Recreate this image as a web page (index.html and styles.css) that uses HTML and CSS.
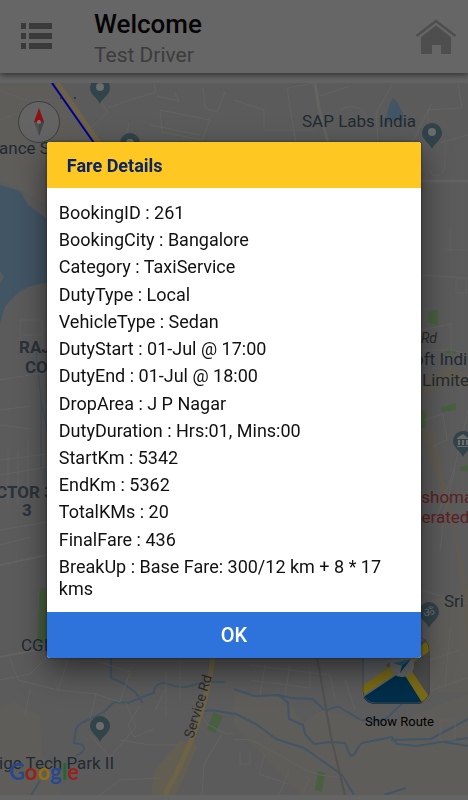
FILE: index.html
```
<!DOCTYPE html>
<html lang="en">
<head>
  <meta charset="UTF-8" />
  <meta name="viewport" content="width=device-width, initial-scale=1.0"/>
  <title>Fare Details</title>
  <link rel="stylesheet" href="styles.css">
</head>
<body>
  <header class="topbar">
    <button class="icon-btn" type="button" aria-label="Menu">
      <svg width="32" height="27" viewBox="0 0 32 27" fill="#3a3a3a">
        <path d="M0 0h5v6H0zM8 0h23v6H8zM0 10h5v6H0zM8 10h23v6H8zM0 20h5v6H0zM8 20h23v6H8z"/>
      </svg>
    </button>
    <div class="titles">
      <h1>Welcome</h1>
      <p>Test Driver</p>
    </div>
    <a class="home-link" href="#" aria-label="Home">
      <svg width="42" height="36" viewBox="0 0 42 36">
        <path d="M1.500 17L21 2l19.500 15" fill="none" stroke="#4e4e4e" stroke-width="2.500"/>
        <path d="M6 18L21 6.500 36 18v17H26v-9h-9v9H6z" fill="#4e4e4e"/>
      </svg>
    </a>
  </header>

  <main class="map">
    <svg class="map-canvas" viewBox="0 83 468 712" preserveAspectRatio="xMidYMid slice">
      <defs>
        <g id="pin">
          <path d="M0 16C-2 10-10 7-10 0a10 10 0 0 1 20 0C10 7 2 10 0 16z"/>
        </g>
      </defs>
      <rect x="0" y="83" width="468" height="712" fill="#5b5b5b"/>

      <!-- land -->
      <g fill="#5f5d5a">
        <path d="M0 83h54l50 62-57 60L0 180zM0 708l14-6 26 14 2 40 18 16v23H0z"/>
        <path d="M234 690l50 8 20 24 18-12 60 16 86-32v101H300l-66-70zM430 600l38-8v100h-38z"/>
        <path d="M155 770l25-30 18 6-22 49h-25z" fill="#635e52"/>
        <path d="M420 430l14 40 18 60 10 60 6 60v-60l-14-70-20-90z" fill="#605c53"/>
        <path d="M422 380l26-14 20 8v14l-22-6-24 14z" fill="#605c53"/>
      </g>

      <!-- parks -->
      <g fill="#48603f">
        <path d="M428 312l10-2v16l-10-4zM445 350h11v4h-11zM441 407l15-4v7l-14 2zM421 410l6 2-2 16h-4zM460 467l8-2v6h-8zM40 588h10v55H37zM214 712l9 5-8 16-8-4zM318 771l7 2-3 19-7-2z"/>
      </g>

      <!-- water -->
      <g fill="#425565">
        <path d="M0 185l20 6 8 14 19 14v64c-20 1-32 10-42 24L0 323v-40l4-6-4-6z"/>
        <path d="M393 98l4 4 6 12v7l-12-1-8 8 3-10 3-12z"/>
      </g>
      <g fill="none" stroke="#425565" stroke-width="2" stroke-linejoin="round">
        <path d="M111 657v21l12 5 12 9 8 11"/>
        <path d="M31 795l9-14M76 756c12-6 10-12-2-13l2-14c4-8 12-8 28-17l10-10 14 1 14-6 12-4c0-10 8-12 20-7 16 4 20-4 34-4h17M204 711c14-2 20 2 30 3"/>
        <path d="M234 689l20 7 25-1 12 3 22 1 10 10c6 4 10-4 16-2l22 13 16 1 10-3 22-21"/>
        <path d="M279 695l9 8 1 16 14 6 2 9 9 10 16-2 15 1 5 12c6 3 6-8 12-12l30-6 5 7 20 2 24-4 27-4M391 740l40-1 37-20M444 742l24 4"/>
        <path d="M234 713l22 11 20 15 28 9 20 14 18 13 12 20M384 795l22-7"/>
        <path d="M41 400l6 30M36 350l5 50v70M44 466v18" stroke-width="1"/>
      </g>

      <!-- roads -->
      <g fill="none" stroke="#636362" stroke-width="1">
        <path d="M0 565l47-10M0 657l47-9" stroke-width="2"/>
        <path d="M315 83l4 25 9 35M421 181h47" stroke-width="3"/>
        <path d="M287 88l3 20 6 35M288 88l26-5M378 143l-2-30 16-28M412 143l20-40M234 100l30 10v20h50M320 96l30-10M340 110c10-6 26-4 26 10M428 125v-15l34-2-4-25M440 143l28-8"/>
        <path d="M100 100l8 12-26 24M108 108l22-8 26-8-2-9M157 96l22 5-4-8M125 143l4-20M160 110l50 10-8 20-40-8zM203 88l2 20 12 4 8-20M150 125l50 10M0 90l25 10 28 0M0 120l18-7"/>
        <path d="M422 350l30 0 16 4M455 470l-10 40-5 40M468 410l-14 60-18 50M445 250h23M450 250v-20M430 170c4 12 16 4 15-8v-20M421 275l47 3M456 280v13h10v-14h-10M421 330l30-6v30M425 420l18-6 4 26-14 6"/>
        <path d="M0 380l47-8M0 410l30-4M20 320v30h22v-30H20zM22 335h20M0 460l47-6M0 475l47-8M8 450v55M18 450v55M28 440v60M0 530l47-8M0 425l30 4M0 545l30-8"/>
        <path d="M0 680l30-6 20-20M10 658l8 22 40 10 10-30M30 690l-5 25M58 690l38 4-6 25M96 694l24 8 10-30M130 672l-30-10M140 705l-12 20 6 12 20-8M90 735l20 22 26-30-10-24M155 710l10-20M166 672v45M180 660v40M120 740l30 5h30"/>
        <path d="M192 700l15 24 20 10h7M222 734l-18 30-2 31M100 795l20-15 40-2"/>
        <path d="M234 740c18-2 20 1 36 10l36 20 14 5 22 3M250 752v12h-10v-12M265 754l-6 20 30 10M289 770l-10 25M310 778l-8 17M250 680l60 8v-20M265 665l-5 30M290 665l-5 30M250 665l80 10 5 25M345 680l10 30M430 660l30-10M432 690l36-12M450 628l-5 60M440 720v20h15v-20zM421 590l47 14"/>
        <path d="M317 657l14 80 14 58" stroke="#515151" stroke-width="2"/>
      </g>
      <path d="M57 83l42 60M213 657c-6 50-22 90-48 138" fill="none" stroke="#6e6347" stroke-width="5"/>
      <path d="M52 83l42 60" fill="none" stroke="#00008c" stroke-width="2"/>
      <g fill="#2b2b2b"><circle cx="61" cy="98" r="1"/><circle cx="75" cy="98" r="1"/></g>

      <!-- pins -->
      <g fill="#32434a">
        <use href="#pin" x="100" y="88"/>
        <use href="#pin" x="130" y="143"/>
        <use href="#pin" x="432" y="133"/>
        <use href="#pin" x="463" y="441"/>
        <use href="#pin" x="429" y="612"/>
        <use href="#pin" x="100" y="726"/>
      </g>
      <g fill="#6a6c6d">
        <circle cx="100" cy="87" r="4"/><circle cx="130" cy="143" r="4"/>
        <circle cx="432" cy="132" r="4"/><circle cx="100" cy="726" r="4"/>
        <path d="M457 438l6-4 5 4v1h-11zM458 440h2v5h-2zM462 440h2v5h-2zM466 440h2v5h-2zM457 446h11v1h-11z"/>
      </g>
      <text class="om" x="423" y="617">ॐ</text>

      <!-- place names -->
      <g class="place">
        <text x="302" y="127">SAP Labs India</text>
        <text x="-1" y="154">ance S</text>
        <text x="414" y="365">oft Indi</text>
        <text x="422" y="386">Limite</text>
        <text x="444" y="607">Sri</text>
        <text x="21" y="651">CGI</text>
        <text x="-1" y="769">ige Tech Park II</text>
      </g>
      <g class="place hospital">
        <text x="412" y="503">ashoma</text>
        <text x="412" y="523">perated</text>
      </g>
      <g class="place area">
        <text x="19" y="353">RAJ</text>
        <text x="25" y="373">CO</text>
        <text x="-4" y="498">CTOR 3</text>
        <text x="22" y="516">3</text>
      </g>
      <g class="place road">
        <text x="421" y="343" font-style="italic">Rd</text>
        <text transform="translate(193 739) rotate(-73)">Service Rd</text>
      </g>

      <text class="google" x="9" y="780"><tspan class="b">G</tspan><tspan class="r">o</tspan><tspan class="y">o</tspan><tspan class="b">g</tspan><tspan class="g">l</tspan><tspan class="r">e</tspan></text>
    </svg>

    <button class="compass" type="button" aria-label="Compass">
      <svg width="12" height="28" viewBox="0 0 12 28">
        <path d="M6 0l5 14H1z" fill="#8e1010"/>
        <path d="M1 14h10L6 28z" fill="#505050"/>
        <path d="M6 14h5L6 28z" fill="#454545"/>
        <circle cx="6" cy="14" r="2" fill="#777"/>
      </svg>
    </button>

    <button class="route-btn" type="button">
      <svg width="68" height="68" viewBox="0 0 68 68">
        <defs>
          <clipPath id="tile"><rect width="68" height="68" rx="13"/></clipPath>
        </defs>
        <g clip-path="url(#tile)">
          <rect width="68" height="68" fill="#5d6064"/>
          <path d="M24 29l44-29v68z" fill="#4b4b4b"/>
          <path d="M0 62l36-24h8l20 30H0z" fill="#002e4a"/>
          <path d="M0 50L68 3v12L0 60z" fill="#786a18"/>
          <path d="M42 38l7-4 19 28-7 6z" fill="#786a18"/>
        </g>
        <rect x="1" y="1" width="66" height="66" rx="12" fill="none" stroke="#444" stroke-width="1"/>
        <circle cx="40" cy="29" r="12" fill="#666"/>
        <path d="M49 23L31 27l9 3z" fill="#1c5a70"/>
        <path d="M49 23l-9 7-2 7z" fill="#003a56"/>
      </svg>
      <span>Show Route</span>
    </button>
  </main>

  <div class="backdrop">
    <section class="dialog" role="dialog" aria-modal="true" aria-labelledby="dialogTitle">
      <h2 id="dialogTitle">Fare Details</h2>
      <ul class="fare-list">
        <li>BookingID : 261</li>
        <li>BookingCity : Bangalore</li>
        <li>Category : TaxiService</li>
        <li>DutyType : Local</li>
        <li>VehicleType : Sedan</li>
        <li>DutyStart : 01-Jul @ 17:00</li>
        <li>DutyEnd : 01-Jul @ 18:00</li>
        <li>DropArea : J P Nagar</li>
        <li>DutyDuration : Hrs:01, Mins:00</li>
        <li>StartKm : 5342</li>
        <li>EndKm : 5362</li>
        <li>TotalKMs : 20</li>
        <li>FinalFare : 436</li>
        <li>BreakUp : Base Fare: 300/12 km + 8 * 17 kms</li>
      </ul>
      <button class="ok-btn" type="button">OK</button>
    </section>
  </div>
</body>
</html>
```
FILE: styles.css
```
* {
  box-sizing: border-box;
}

body {
  font-family: Roboto, "Liberation Sans", sans-serif;
  background: #646464;
  margin: 0;
  min-height: 100vh;
  display: flex;
  flex-direction: column;
}

button {
  font-family: inherit;
  border: none;
  background: none;
  padding: 0;
  cursor: pointer;
}

svg {
  display: block;
}

/* header */
.topbar {
  display: flex;
  align-items: center;
  height: 73px;
  padding: 0 11px 0 21px;
  background: #666;
  box-shadow: 0 2px 6px rgba(0,0,0,0.5);
}

.titles {
  flex: 1;
  margin-left: 41px;
  padding-top: 4px;
}

.titles h1 {
  margin: 0;
  font-size: 26px;
  line-height: 32px;
  font-weight: 500;
  color: #050505;
}

.titles p {
  margin: 0;
  font-size: 21px;
  line-height: 30px;
  color: #3c3c3c;
}

/* map */
.map {
  position: relative;
  flex: 1;
  margin: 10px 0 5px;
  overflow: hidden;
}

.map-canvas {
  position: absolute;
  width: 100%;
  height: 100%;
}

.place {
  font-size: 17px;
  fill: #202b31;
}

.hospital {
  fill: #5c1f24;
}

.area {
  font-weight: 700;
  fill: #2a323b;
}

.road {
  font-size: 14px;
  fill: #2b2b2b;
}

.om {
  font-size: 13px;
  fill: #6a6c6d;
}

.google {
  font-family: Lato, sans-serif;
  font-size: 22px;
  font-weight: 700;
}

.google .b { fill: #26498f; }
.google .r { fill: #96231b; }
.google .y { fill: #96700a; }
.google .g { fill: #22672f; }

.compass {
  position: absolute;
  left: 18px;
  top: 18px;
  width: 42px;
  height: 42px;
  border: 1px solid #3e3e3e;
  border-radius: 50%;
  background: #646464;
  display: flex;
  align-items: center;
  justify-content: center;
}

.route-btn {
  position: absolute;
  right: 34px;
  bottom: 64px;
  display: flex;
  flex-direction: column;
  align-items: flex-start;
  gap: 9px;
  font-size: 13px;
  line-height: 18px;
  color: #000;
}

.route-btn span {
  padding-left: 3px;
}

/* dialog */
.backdrop {
  position: fixed;
  inset: 0;
  display: flex;
  align-items: center;
  justify-content: center;
}

.dialog {
  width: 80%;
  background: #fff;
  border-radius: 3px;
  overflow: hidden;
  box-shadow: 0 12px 30px rgba(0,0,0,0.5), 0 0 3px rgba(0,0,0,0.5);
}

.dialog h2 {
  margin: 0;
  padding: 2px 20px 0;
  font-size: 18px;
  line-height: 44px;
  font-weight: 700;
  color: #0b2463;
  background: #ffc722;
}

.fare-list {
  display: flex;
  flex-direction: column;
  justify-content: space-between;
  min-height: 424px;
  margin: 0;
  padding: 14px 12px 12px;
  list-style: none;
  font-size: 18px;
  line-height: 22px;
  color: #111;
}

.ok-btn {
  display: block;
  width: 100%;
  background: #2e72db;
  color: #fff;
  font-size: 20px;
  line-height: 46px;
  font-weight: 500;
}
```
